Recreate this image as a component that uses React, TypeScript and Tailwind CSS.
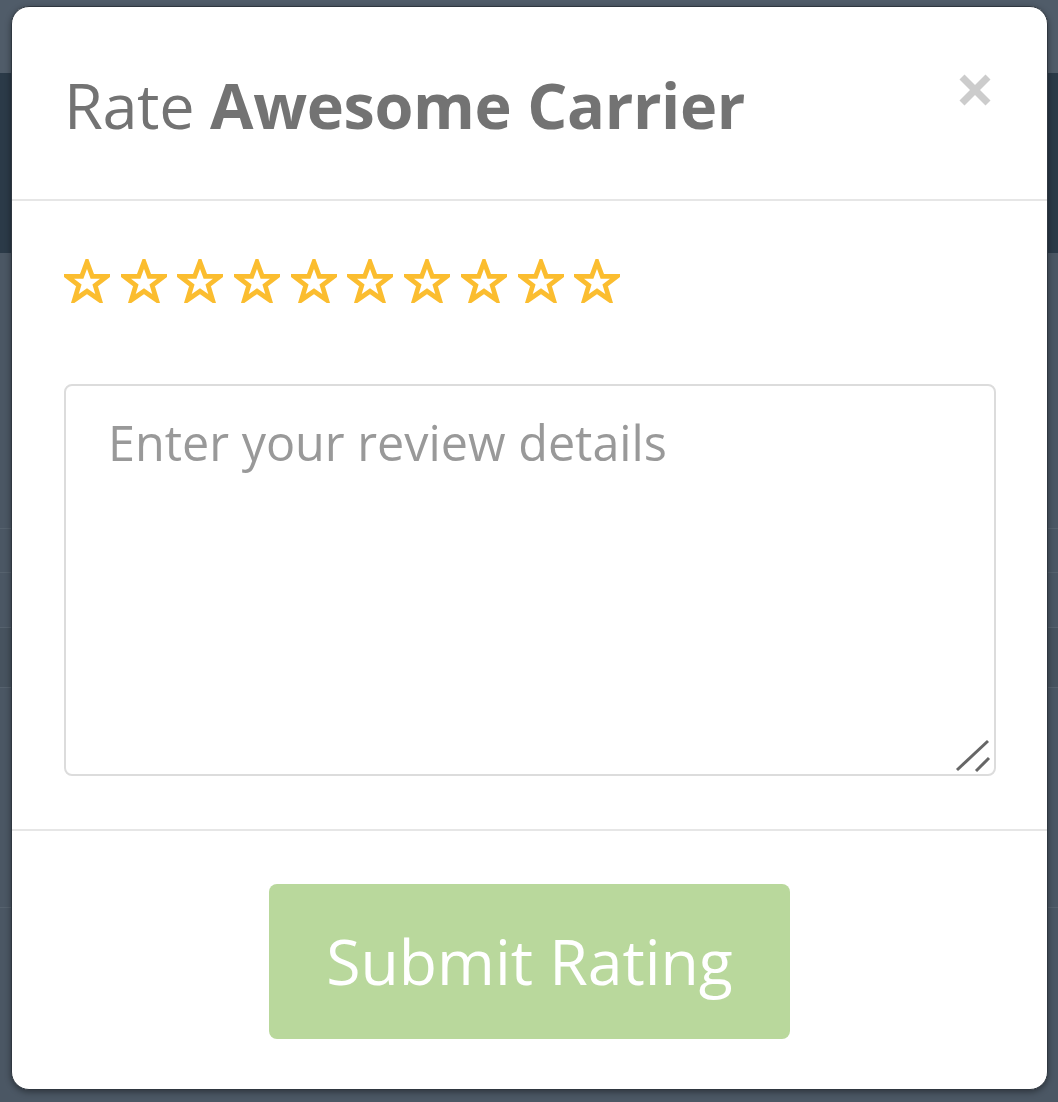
import React from 'react';

const font = { fontFamily: '"Open Sans", "Noto Sans", sans-serif' };

function Star() {
  return (
    <svg width="46" height="44" viewBox="0 0 46 44" className="shrink-0">
      <polygon
        points="23,3 28.3,17.3 43,17.3 31.2,26.4 35.6,41 23,32.2 10.4,41 14.8,26.4 3,17.3 17.7,17.3"
        fill="none"
        stroke="#fbbd2f"
        strokeWidth="4.8"
        strokeLinejoin="miter"
      />
    </svg>
  );
}

export default function App() {
  return (
    <div className="relative w-[1058px] h-[1102px] overflow-hidden bg-[#4b5764]" style={font}>
      {/* page behind the overlay */}
      <div className="flex flex-col">
        <div className="h-[73px] bg-[#505c69]" />
        <div className="h-[180px] bg-[#2b3a48]" />
        <div className="h-[275px]" />
        <div className="h-[45px] border-y border-[#56626e]" />
        <div className="h-[55px] border-b border-[#56626e]" />
        <div className="h-[60px] bg-[#47535f] border-b border-[#56626e]" />
        <div className="h-[220px] border-b border-[#56626e]" />
      </div>

      {/* modal */}
      <div className="absolute left-[11px] top-[6px] w-[1037px] h-[1084px] bg-white rounded-[18px] border border-[#2f3740] shadow-[0_2px_6px_rgba(0,0,0,0.4)] flex flex-col">
        <div className="h-[194px] shrink-0 flex items-start justify-between pl-[52px] pr-[56px] border-b-2 border-[#e6e6e6]">
          <h1 className="mt-[58px] text-[63px] leading-[80px] text-[#737373] font-normal tracking-[-0.4px]">
            Rate <span className="font-bold">Awesome Carrier</span>
          </h1>
          <button className="mt-[67px] text-[#cccccc]">
            <svg width="32" height="32" viewBox="0 0 32 32">
              <line x1="3" y1="3" x2="29" y2="29" stroke="#cccccc" strokeWidth="7" />
              <line x1="29" y1="3" x2="3" y2="29" stroke="#cccccc" strokeWidth="7" />
            </svg>
          </button>
        </div>

        <div className="pt-[58px] pb-[53px] px-[52px] border-b-2 border-[#e6e6e6]">
          <div className="flex gap-[10.7px]">
            {Array.from({ length: 10 }).map((_, i) => (
              <Star key={i} />
            ))}
          </div>
          <div className="relative mt-[81px]">
            <textarea
              placeholder="Enter your review details"
              className="block w-[932px] h-[392px] resize-none rounded-[8px] border-2 border-[#dcdcdc] pl-[42px] pr-[40px] pt-[20px] text-[48.5px] leading-[72px] text-[#555] placeholder:text-[#999999] outline-none"
              style={font}
            />
            <svg className="absolute right-[4px] bottom-[3px]" width="36" height="36" viewBox="0 0 36 36">
              <line x1="2" y1="33" x2="33" y2="4" stroke="#666666" strokeWidth="3" />
              <line x1="21" y1="34" x2="34" y2="21" stroke="#666666" strokeWidth="3" />
            </svg>
          </div>
        </div>

        <div className="flex justify-center pt-[53px]">
          <button className="w-[521px] h-[155px] rounded-[8px] bg-[#b9d89c] text-white text-[62.5px] leading-none">
            Submit Rating
          </button>
        </div>
      </div>
    </div>
  );
}
